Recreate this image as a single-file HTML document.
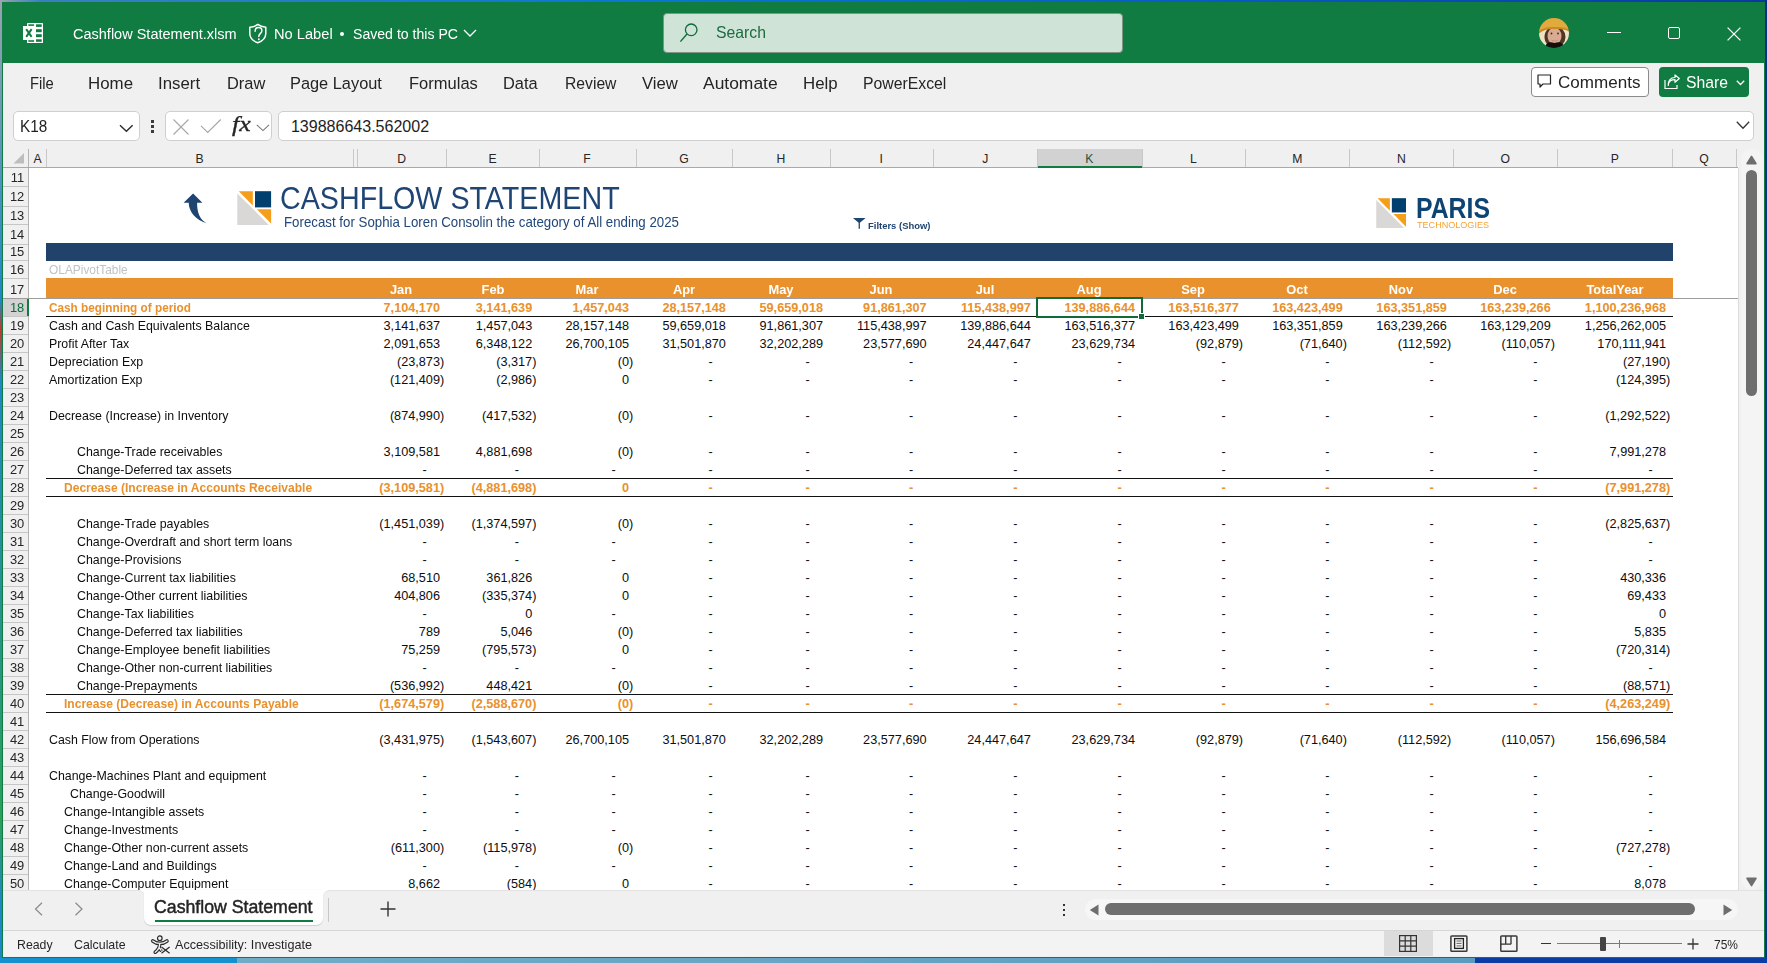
<!DOCTYPE html><html><head><meta charset="utf-8"><style>
html,body{margin:0;padding:0;}
body{width:1767px;height:963px;overflow:hidden;position:relative;background:#0b78c8;font-family:"Liberation Sans",sans-serif;}
.t{position:absolute;white-space:pre;line-height:1;}
.r{position:absolute;}
svg{position:absolute;overflow:visible;}
</style></head><body>
<div class="r" style="left:0px;top:0px;width:1767px;height:2px;background:linear-gradient(90deg,#9aa4ad 0,#3a7fc0 40px,#0b78d0 600px,#0a5bc4 1200px,#0a3aa0 1767px);"></div>
<div class="r" style="left:0px;top:0px;width:2px;height:963px;background:linear-gradient(180deg,#9aa4ad 0,#1f86c9 300px,#c0392b 330px,#1f86c9 380px,#2e9e5a 820px,#1f86c9 900px);"></div>
<div class="r" style="left:1765px;top:0px;width:2px;height:963px;background:#0a2f8a;"></div>
<div class="r" style="left:0px;top:958px;width:1767px;height:5px;background:linear-gradient(90deg,#1591cf 0,#1591cf 237px,#70acc6 237px,#5a9cc0 1475px,#0b3ca6 1475px);"></div>
<div class="r" style="left:2px;top:2px;width:1763px;height:956px;background:#f0f0f0;"></div>
<div class="r" style="left:2px;top:2px;width:1763px;height:61px;background:#107c41;"></div>
<div class="r" style="left:2px;top:63px;width:1px;height:895px;background:#107c41;"></div>
<div class="r" style="left:1764px;top:63px;width:1px;height:895px;background:#107c41;"></div>
<div class="r" style="left:2px;top:957px;width:1763px;height:1px;background:#107c41;"></div>
<svg style="left:23px;top:23px" width="20" height="20" viewBox="0 0 20 20">
<rect x="4" y="0" width="16" height="20" rx="0.4" fill="#fff"/>
<rect x="0" y="3" width="11.8" height="14" fill="#fff"/>
<rect x="5.3" y="1.3" width="5.8" height="1.6" fill="#107c41"/>
<rect x="13" y="1.3" width="5.7" height="2.6" fill="#107c41"/>
<rect x="13" y="6.2" width="5.7" height="3" fill="#107c41"/>
<rect x="13" y="11.2" width="5.7" height="3" fill="#107c41"/>
<rect x="13" y="16.3" width="5.7" height="2.5" fill="#107c41"/>
<rect x="5.3" y="17.2" width="5.8" height="1.6" fill="#107c41"/>
<path d="M3.2 6.2 L8.6 13.8 M8.6 6.2 L3.2 13.8" stroke="#107c41" stroke-width="2"/>
</svg>
<div class="t" style="top:26.28px;font-size:15.2px;color:#fff;left:73.40px;transform:scaleX(0.955);transform-origin:0 0;">Cashflow Statement.xlsm</div>
<svg style="left:248px;top:23px" width="20" height="21" viewBox="0 0 20 21">
<path d="M9.8 1.4 C11.8 3 14.8 4 17.8 4.3 V10.5 C17.8 15 14 18.2 9.8 19.8 C5.6 18.2 1.8 15 1.8 10.5 V4.3 C4.8 4 7.8 3 9.8 1.4 Z" fill="none" stroke="#fff" stroke-width="1.5" stroke-linejoin="round"/>
<path d="M7.1 8.3 C7.1 5.8 8.6 4.6 10.5 4.6 C12.5 4.6 13.9 5.9 13.9 7.7 C13.9 10.1 11 10.6 10.8 13.4" fill="none" stroke="#fff" stroke-width="1.5" stroke-linecap="round"/>
<circle cx="10.8" cy="16.3" r="0.95" fill="#fff"/>
</svg>
<div class="t" style="top:26.28px;font-size:15.2px;color:#fff;left:273.50px;transform:scaleX(0.965);transform-origin:0 0;">No Label</div>
<div class="r" style="left:339.8px;top:32px;width:4.4px;height:4.4px;border-radius:50%;background:#fff"></div>
<div class="t" style="top:26.28px;font-size:15.2px;color:#fff;left:352.50px;transform:scaleX(0.928);transform-origin:0 0;">Saved to this PC</div>
<svg style="left:463px;top:29px" width="14" height="8" viewBox="0 0 14 8"><path d="M1 1 L7 7 L13 1" fill="none" stroke="#fff" stroke-width="1.3"/></svg>
<div class="r" style="left:663px;top:13px;width:458px;height:38px;background:#d0e3d7;border:1px solid #7d9486;border-radius:4px;"></div>
<svg style="left:679px;top:22px" width="20" height="22" viewBox="0 0 20 22">
<circle cx="12.2" cy="7.8" r="5.8" fill="none" stroke="#0f6b3a" stroke-width="1.3"/>
<path d="M8 12 L1.4 19.6" stroke="#0f6b3a" stroke-width="1.4"/>
</svg>
<div class="t" style="top:23.77px;font-size:16.5px;color:#1d6b40;left:715.70px;transform:scaleX(0.955);transform-origin:0 0;">Search</div>
<svg style="left:1539px;top:18px" width="30" height="30" viewBox="0 0 30 30">
<defs><clipPath id="cp"><circle cx="15" cy="15" r="15"/></clipPath>
<filter id="bl" x="-10%" y="-10%" width="120%" height="120%"><feGaussianBlur stdDeviation="0.7"/></filter></defs>
<g clip-path="url(#cp)"><g filter="url(#bl)">
<rect width="30" height="30" fill="#efe3c6"/>
<ellipse cx="16" cy="19" rx="10.5" ry="11" fill="#4f3526"/>
<ellipse cx="15.5" cy="18" rx="7" ry="8.6" fill="#d9ab92"/>
<path d="M6 30 C7 24 11 23.5 15.5 25 C20 23.5 24 24 25 30 Z" fill="#121010"/>
<path d="M-1 16 C3 11 6 10 15 10 C22 10 27 11 31 13 L31 0 L-1 0 Z" fill="#e2aa3c"/>
<path d="M-1 17 C3 12 8 11 15 11 C22 11 27 11.5 31 14 L31 12 C27 9.5 22 9 15 9 C8 9 3 10 -1 14 Z" fill="#c98a26"/>
<circle cx="12.5" cy="15.5" r="0.9" fill="#3a2a22"/><circle cx="19" cy="15.5" r="0.9" fill="#3a2a22"/>
<path d="M12.5 22 C14.5 23.3 17 23.3 19 22" fill="none" stroke="#c98a80" stroke-width="1"/>
</g></g></svg>
<div class="r" style="left:1607px;top:32px;width:13.5px;height:1.2999999999999972px;background:#fff;"></div>
<div class="r" style="left:1667.5px;top:26.8px;width:10.6px;height:10.6px;border:1.3px solid #fff;border-radius:2px"></div>
<svg style="left:1727px;top:26.5px" width="14" height="14" viewBox="0 0 14 14"><path d="M0.6 0.6 L13.4 13.4 M13.4 0.6 L0.6 13.4" stroke="#fff" stroke-width="1.3"/></svg>
<div class="t" style="top:75.62px;font-size:16.8px;color:#242424;left:29.50px;transform:scaleX(0.879);transform-origin:0 0;">File</div>
<div class="t" style="top:75.62px;font-size:16.8px;color:#242424;left:88.30px;transform:scaleX(1.006);transform-origin:0 0;">Home</div>
<div class="t" style="top:75.62px;font-size:16.8px;color:#242424;left:158.20px;transform:scaleX(1.002);transform-origin:0 0;">Insert</div>
<div class="t" style="top:75.62px;font-size:16.8px;color:#242424;left:226.50px;transform:scaleX(0.979);transform-origin:0 0;">Draw</div>
<div class="t" style="top:75.62px;font-size:16.8px;color:#242424;left:290.30px;transform:scaleX(0.975);transform-origin:0 0;">Page Layout</div>
<div class="t" style="top:75.62px;font-size:16.8px;color:#242424;left:409.20px;transform:scaleX(0.984);transform-origin:0 0;">Formulas</div>
<div class="t" style="top:75.62px;font-size:16.8px;color:#242424;left:502.50px;transform:scaleX(0.978);transform-origin:0 0;">Data</div>
<div class="t" style="top:75.62px;font-size:16.8px;color:#242424;left:564.60px;transform:scaleX(0.935);transform-origin:0 0;">Review</div>
<div class="t" style="top:75.62px;font-size:16.8px;color:#242424;left:642.20px;transform:scaleX(0.994);transform-origin:0 0;">View</div>
<div class="t" style="top:75.62px;font-size:16.8px;color:#242424;left:702.50px;transform:scaleX(1.039);transform-origin:0 0;">Automate</div>
<div class="t" style="top:75.62px;font-size:16.8px;color:#242424;left:803.00px;transform:scaleX(1.004);transform-origin:0 0;">Help</div>
<div class="t" style="top:75.62px;font-size:16.8px;color:#242424;left:863.20px;transform:scaleX(0.941);transform-origin:0 0;">PowerExcel</div>
<div class="r" style="left:1531px;top:67px;width:116px;height:28px;background:#fff;border:1px solid #8a8a8a;border-radius:4px"></div>
<svg style="left:1537px;top:74px" width="16" height="15" viewBox="0 0 16 15">
<path d="M1 1 H13.5 V10 H6 L3 13 V10 H1 Z" fill="none" stroke="#242424" stroke-width="1.2" stroke-linejoin="round"/></svg>
<div class="t" style="top:74.72px;font-size:16.8px;color:#242424;left:1557.50px;transform:scaleX(1.016);transform-origin:0 0;">Comments</div>
<div class="r" style="left:1659px;top:67px;width:90px;height:30px;background:#107c41;border-radius:4px"></div>
<svg style="left:1664px;top:73px" width="17" height="17" viewBox="0 0 17 17">
<path d="M1 7 V15.5 H13 V12" fill="none" stroke="#fff" stroke-width="1.2"/>
<path d="M4.2 12.5 C4.2 8 8 6.6 11 6.6 V9.3 L15.3 5.5 L11 1.9 V4.5 C6.5 4.5 4.2 7.8 4.2 12.5 Z" fill="none" stroke="#fff" stroke-width="1.2" stroke-linejoin="round"/></svg>
<div class="t" style="top:74.72px;font-size:16.8px;color:#fff;left:1685.60px;transform:scaleX(0.937);transform-origin:0 0;">Share</div>
<svg style="left:1736px;top:80px" width="9" height="6" viewBox="0 0 9 6"><path d="M0.8 0.8 L4.5 4.5 L8.2 0.8" fill="none" stroke="#fff" stroke-width="1.3"/></svg>
<div class="r" style="left:12.6px;top:111px;width:125.4px;height:28px;background:#fff;border:1px solid #cfcfcf;border-radius:5px"></div>
<div class="t" style="top:118.34px;font-size:16.3px;color:#1e1e1e;left:19.80px;transform:scaleX(0.94);transform-origin:0 0;">K18</div>
<svg style="left:119px;top:124px" width="15" height="9" viewBox="0 0 15 9"><path d="M1 1.3 L7.4 7.2 L13.6 1.3" fill="none" stroke="#2a2a2a" stroke-width="1.4"/></svg>
<div class="r" style="left:151px;top:120.2px;width:3px;height:2.799999999999997px;background:#3a3a3a;"></div>
<div class="r" style="left:151px;top:125.2px;width:3px;height:2.799999999999997px;background:#3a3a3a;"></div>
<div class="r" style="left:151px;top:130.2px;width:3px;height:2.8000000000000114px;background:#3a3a3a;"></div>
<div class="r" style="left:165.3px;top:111px;width:105px;height:28px;background:#fff;border:1px solid #cfcfcf;border-radius:5px"></div>
<svg style="left:173px;top:118.5px" width="16" height="16" viewBox="0 0 16 16"><path d="M0.5 0.5 L15.5 15.5 M15.5 0.5 L0.5 15.5" stroke="#a6a6a6" stroke-width="1.1"/></svg>
<svg style="left:200px;top:118.5px" width="22" height="15" viewBox="0 0 22 15"><path d="M1 6.8 L7.7 13.5 L20.7 0.5" fill="none" stroke="#a6a6a6" stroke-width="1.1"/></svg>
<div class="t" style="left:231.5px;top:112.6px;transform:scaleX(1.17);transform-origin:0 0;font-family:'Liberation Serif',serif;font-style:italic;font-size:22px;color:#262626;-webkit-text-stroke:0.35px #262626;">fx</div>
<svg style="left:256px;top:123.5px" width="14" height="8" viewBox="0 0 14 8"><path d="M0.8 0.8 L7 6.6 L13 0.8" fill="none" stroke="#7a7a7a" stroke-width="1.1"/></svg>
<div class="r" style="left:277.5px;top:111px;width:1474.5px;height:28px;background:#fff;border:1px solid #cfcfcf;border-radius:5px"></div>
<div class="t" style="top:118.26px;font-size:16.05px;color:#1e1e1e;left:290.90px;">139886643.562002</div>
<svg style="left:1735.5px;top:121px" width="14" height="9" viewBox="0 0 14 9"><path d="M0.8 0.8 L7 7.2 L13.2 0.8" fill="none" stroke="#333" stroke-width="1.3"/></svg>
<div class="r" style="left:3px;top:149px;width:1735px;height:19px;background:#f0f0f0;"></div>
<div class="r" style="left:29px;top:168px;width:1709px;height:722px;background:#fff;"></div>
<div class="r" style="left:3px;top:168px;width:25px;height:722px;background:#f0f0f0;"></div>
<svg style="left:13px;top:153px" width="12" height="11" viewBox="0 0 12 11"><path d="M11 0 V10.5 H0.5 Z" fill="#bdbdbd"/></svg>
<div class="r" style="left:28px;top:149px;width:1px;height:741px;background:#b4b4b4;"></div>
<div class="r" style="left:3px;top:167px;width:1735px;height:1px;background:#a9a9a9;"></div>
<div class="r" style="left:1037.5px;top:149px;width:104.0px;height:19px;background:#d2d2d2;"></div>
<div class="r" style="left:1037.5px;top:166px;width:104.0px;height:2px;background:#107c41;"></div>
<div class="r" style="left:46px;top:149px;width:1px;height:18px;background:#c8c8c8;"></div>
<div class="r" style="left:353px;top:149px;width:1px;height:18px;background:#c8c8c8;"></div>
<div class="r" style="left:357px;top:149px;width:1px;height:18px;background:#c8c8c8;"></div>
<div class="r" style="left:446px;top:149px;width:1px;height:18px;background:#c8c8c8;"></div>
<div class="r" style="left:539px;top:149px;width:1px;height:18px;background:#c8c8c8;"></div>
<div class="r" style="left:636px;top:149px;width:1px;height:18px;background:#c8c8c8;"></div>
<div class="r" style="left:732px;top:149px;width:1px;height:18px;background:#c8c8c8;"></div>
<div class="r" style="left:830px;top:149px;width:1px;height:18px;background:#c8c8c8;"></div>
<div class="r" style="left:933px;top:149px;width:1px;height:18px;background:#c8c8c8;"></div>
<div class="r" style="left:1037px;top:149px;width:1px;height:18px;background:#c8c8c8;"></div>
<div class="r" style="left:1142px;top:149px;width:1px;height:18px;background:#c8c8c8;"></div>
<div class="r" style="left:1245px;top:149px;width:1px;height:18px;background:#c8c8c8;"></div>
<div class="r" style="left:1349px;top:149px;width:1px;height:18px;background:#c8c8c8;"></div>
<div class="r" style="left:1453px;top:149px;width:1px;height:18px;background:#c8c8c8;"></div>
<div class="r" style="left:1557px;top:149px;width:1px;height:18px;background:#c8c8c8;"></div>
<div class="r" style="left:1672px;top:149px;width:1px;height:18px;background:#c8c8c8;"></div>
<div class="r" style="left:1736px;top:149px;width:1px;height:18px;background:#c8c8c8;"></div>
<div class="t" style="top:152.63px;font-size:12.2px;color:#262626;left:-262.50px;width:600px;text-align:center;">A</div>
<div class="t" style="top:152.63px;font-size:12.2px;color:#262626;left:-100.45px;width:600px;text-align:center;">B</div>
<div class="t" style="top:152.63px;font-size:12.2px;color:#262626;left:101.55px;width:600px;text-align:center;">D</div>
<div class="t" style="top:152.63px;font-size:12.2px;color:#262626;left:192.60px;width:600px;text-align:center;">E</div>
<div class="t" style="top:152.63px;font-size:12.2px;color:#262626;left:287.10px;width:600px;text-align:center;">F</div>
<div class="t" style="top:152.63px;font-size:12.2px;color:#262626;left:383.95px;width:600px;text-align:center;">G</div>
<div class="t" style="top:152.63px;font-size:12.2px;color:#262626;left:480.95px;width:600px;text-align:center;">H</div>
<div class="t" style="top:152.63px;font-size:12.2px;color:#262626;left:581.30px;width:600px;text-align:center;">I</div>
<div class="t" style="top:152.63px;font-size:12.2px;color:#262626;left:685.20px;width:600px;text-align:center;">J</div>
<div class="t" style="top:152.63px;font-size:12.2px;color:#24543a;left:789.40px;width:600px;text-align:center;">K</div>
<div class="t" style="top:152.63px;font-size:12.2px;color:#262626;left:893.45px;width:600px;text-align:center;">L</div>
<div class="t" style="top:152.63px;font-size:12.2px;color:#262626;left:997.30px;width:600px;text-align:center;">M</div>
<div class="t" style="top:152.63px;font-size:12.2px;color:#262626;left:1101.30px;width:600px;text-align:center;">N</div>
<div class="t" style="top:152.63px;font-size:12.2px;color:#262626;left:1205.30px;width:600px;text-align:center;">O</div>
<div class="t" style="top:152.63px;font-size:12.2px;color:#262626;left:1314.85px;width:600px;text-align:center;">P</div>
<div class="t" style="top:152.63px;font-size:12.2px;color:#262626;left:1404.05px;width:600px;text-align:center;">Q</div>
<div class="r" style="left:3px;top:298.5px;width:25px;height:17.80000000000001px;background:#d2d2d2;"></div>
<div class="r" style="left:27px;top:298.5px;width:2px;height:17.80000000000001px;background:#107c41;"></div>
<div class="r" style="left:3px;top:186px;width:25px;height:1px;background:#c6c6c6;"></div>
<div class="t" style="top:171.34px;font-size:13.6px;color:#262626;right:1740.00px;transform:scaleX(0.95);transform-origin:100% 0;padding-right:2.5px;">11</div>
<div class="r" style="left:3px;top:206px;width:25px;height:1px;background:#c6c6c6;"></div>
<div class="t" style="top:190.34px;font-size:13.6px;color:#262626;right:1740.00px;transform:scaleX(0.95);transform-origin:100% 0;padding-right:2.5px;">12</div>
<div class="r" style="left:3px;top:224px;width:25px;height:1px;background:#c6c6c6;"></div>
<div class="t" style="top:209.34px;font-size:13.6px;color:#262626;right:1740.00px;transform:scaleX(0.95);transform-origin:100% 0;padding-right:2.5px;">13</div>
<div class="r" style="left:3px;top:244px;width:25px;height:1px;background:#c6c6c6;"></div>
<div class="t" style="top:228.34px;font-size:13.6px;color:#262626;right:1740.00px;transform:scaleX(0.95);transform-origin:100% 0;padding-right:2.5px;">14</div>
<div class="r" style="left:3px;top:260px;width:25px;height:1px;background:#c6c6c6;"></div>
<div class="t" style="top:245.04px;font-size:13.6px;color:#262626;right:1740.00px;transform:scaleX(0.95);transform-origin:100% 0;padding-right:2.5px;">15</div>
<div class="r" style="left:3px;top:278px;width:25px;height:1px;background:#c6c6c6;"></div>
<div class="t" style="top:263.24px;font-size:13.6px;color:#262626;right:1740.00px;transform:scaleX(0.95);transform-origin:100% 0;padding-right:2.5px;">16</div>
<div class="r" style="left:3px;top:298px;width:25px;height:1px;background:#c6c6c6;"></div>
<div class="t" style="top:283.04px;font-size:13.6px;color:#262626;right:1740.00px;transform:scaleX(0.95);transform-origin:100% 0;padding-right:2.5px;">17</div>
<div class="r" style="left:3px;top:316px;width:25px;height:1px;background:#c6c6c6;"></div>
<div class="t" style="top:301.14px;font-size:13.6px;color:#0e6b3a;right:1740.00px;transform:scaleX(0.95);transform-origin:100% 0;padding-right:2.5px;">18</div>
<div class="r" style="left:3px;top:334px;width:25px;height:1px;background:#c6c6c6;"></div>
<div class="t" style="top:319.14px;font-size:13.6px;color:#262626;right:1740.00px;transform:scaleX(0.95);transform-origin:100% 0;padding-right:2.5px;">19</div>
<div class="r" style="left:3px;top:352px;width:25px;height:1px;background:#c6c6c6;"></div>
<div class="t" style="top:337.14px;font-size:13.6px;color:#262626;right:1740.00px;transform:scaleX(0.95);transform-origin:100% 0;padding-right:2.5px;">20</div>
<div class="r" style="left:3px;top:370px;width:25px;height:1px;background:#c6c6c6;"></div>
<div class="t" style="top:355.14px;font-size:13.6px;color:#262626;right:1740.00px;transform:scaleX(0.95);transform-origin:100% 0;padding-right:2.5px;">21</div>
<div class="r" style="left:3px;top:388px;width:25px;height:1px;background:#c6c6c6;"></div>
<div class="t" style="top:373.14px;font-size:13.6px;color:#262626;right:1740.00px;transform:scaleX(0.95);transform-origin:100% 0;padding-right:2.5px;">22</div>
<div class="r" style="left:3px;top:406px;width:25px;height:1px;background:#c6c6c6;"></div>
<div class="t" style="top:391.14px;font-size:13.6px;color:#262626;right:1740.00px;transform:scaleX(0.95);transform-origin:100% 0;padding-right:2.5px;">23</div>
<div class="r" style="left:3px;top:424px;width:25px;height:1px;background:#c6c6c6;"></div>
<div class="t" style="top:409.14px;font-size:13.6px;color:#262626;right:1740.00px;transform:scaleX(0.95);transform-origin:100% 0;padding-right:2.5px;">24</div>
<div class="r" style="left:3px;top:442px;width:25px;height:1px;background:#c6c6c6;"></div>
<div class="t" style="top:427.14px;font-size:13.6px;color:#262626;right:1740.00px;transform:scaleX(0.95);transform-origin:100% 0;padding-right:2.5px;">25</div>
<div class="r" style="left:3px;top:460px;width:25px;height:1px;background:#c6c6c6;"></div>
<div class="t" style="top:445.14px;font-size:13.6px;color:#262626;right:1740.00px;transform:scaleX(0.95);transform-origin:100% 0;padding-right:2.5px;">26</div>
<div class="r" style="left:3px;top:478px;width:25px;height:1px;background:#c6c6c6;"></div>
<div class="t" style="top:463.14px;font-size:13.6px;color:#262626;right:1740.00px;transform:scaleX(0.95);transform-origin:100% 0;padding-right:2.5px;">27</div>
<div class="r" style="left:3px;top:496px;width:25px;height:1px;background:#c6c6c6;"></div>
<div class="t" style="top:481.14px;font-size:13.6px;color:#262626;right:1740.00px;transform:scaleX(0.95);transform-origin:100% 0;padding-right:2.5px;">28</div>
<div class="r" style="left:3px;top:514px;width:25px;height:1px;background:#c6c6c6;"></div>
<div class="t" style="top:499.14px;font-size:13.6px;color:#262626;right:1740.00px;transform:scaleX(0.95);transform-origin:100% 0;padding-right:2.5px;">29</div>
<div class="r" style="left:3px;top:532px;width:25px;height:1px;background:#c6c6c6;"></div>
<div class="t" style="top:517.14px;font-size:13.6px;color:#262626;right:1740.00px;transform:scaleX(0.95);transform-origin:100% 0;padding-right:2.5px;">30</div>
<div class="r" style="left:3px;top:550px;width:25px;height:1px;background:#c6c6c6;"></div>
<div class="t" style="top:535.14px;font-size:13.6px;color:#262626;right:1740.00px;transform:scaleX(0.95);transform-origin:100% 0;padding-right:2.5px;">31</div>
<div class="r" style="left:3px;top:568px;width:25px;height:1px;background:#c6c6c6;"></div>
<div class="t" style="top:553.14px;font-size:13.6px;color:#262626;right:1740.00px;transform:scaleX(0.95);transform-origin:100% 0;padding-right:2.5px;">32</div>
<div class="r" style="left:3px;top:586px;width:25px;height:1px;background:#c6c6c6;"></div>
<div class="t" style="top:571.14px;font-size:13.6px;color:#262626;right:1740.00px;transform:scaleX(0.95);transform-origin:100% 0;padding-right:2.5px;">33</div>
<div class="r" style="left:3px;top:604px;width:25px;height:1px;background:#c6c6c6;"></div>
<div class="t" style="top:589.14px;font-size:13.6px;color:#262626;right:1740.00px;transform:scaleX(0.95);transform-origin:100% 0;padding-right:2.5px;">34</div>
<div class="r" style="left:3px;top:622px;width:25px;height:1px;background:#c6c6c6;"></div>
<div class="t" style="top:607.14px;font-size:13.6px;color:#262626;right:1740.00px;transform:scaleX(0.95);transform-origin:100% 0;padding-right:2.5px;">35</div>
<div class="r" style="left:3px;top:640px;width:25px;height:1px;background:#c6c6c6;"></div>
<div class="t" style="top:625.14px;font-size:13.6px;color:#262626;right:1740.00px;transform:scaleX(0.95);transform-origin:100% 0;padding-right:2.5px;">36</div>
<div class="r" style="left:3px;top:658px;width:25px;height:1px;background:#c6c6c6;"></div>
<div class="t" style="top:643.14px;font-size:13.6px;color:#262626;right:1740.00px;transform:scaleX(0.95);transform-origin:100% 0;padding-right:2.5px;">37</div>
<div class="r" style="left:3px;top:676px;width:25px;height:1px;background:#c6c6c6;"></div>
<div class="t" style="top:661.14px;font-size:13.6px;color:#262626;right:1740.00px;transform:scaleX(0.95);transform-origin:100% 0;padding-right:2.5px;">38</div>
<div class="r" style="left:3px;top:694px;width:25px;height:1px;background:#c6c6c6;"></div>
<div class="t" style="top:679.14px;font-size:13.6px;color:#262626;right:1740.00px;transform:scaleX(0.95);transform-origin:100% 0;padding-right:2.5px;">39</div>
<div class="r" style="left:3px;top:712px;width:25px;height:1px;background:#c6c6c6;"></div>
<div class="t" style="top:697.14px;font-size:13.6px;color:#262626;right:1740.00px;transform:scaleX(0.95);transform-origin:100% 0;padding-right:2.5px;">40</div>
<div class="r" style="left:3px;top:730px;width:25px;height:1px;background:#c6c6c6;"></div>
<div class="t" style="top:715.14px;font-size:13.6px;color:#262626;right:1740.00px;transform:scaleX(0.95);transform-origin:100% 0;padding-right:2.5px;">41</div>
<div class="r" style="left:3px;top:748px;width:25px;height:1px;background:#c6c6c6;"></div>
<div class="t" style="top:733.14px;font-size:13.6px;color:#262626;right:1740.00px;transform:scaleX(0.95);transform-origin:100% 0;padding-right:2.5px;">42</div>
<div class="r" style="left:3px;top:766px;width:25px;height:1px;background:#c6c6c6;"></div>
<div class="t" style="top:751.14px;font-size:13.6px;color:#262626;right:1740.00px;transform:scaleX(0.95);transform-origin:100% 0;padding-right:2.5px;">43</div>
<div class="r" style="left:3px;top:784px;width:25px;height:1px;background:#c6c6c6;"></div>
<div class="t" style="top:769.14px;font-size:13.6px;color:#262626;right:1740.00px;transform:scaleX(0.95);transform-origin:100% 0;padding-right:2.5px;">44</div>
<div class="r" style="left:3px;top:802px;width:25px;height:1px;background:#c6c6c6;"></div>
<div class="t" style="top:787.14px;font-size:13.6px;color:#262626;right:1740.00px;transform:scaleX(0.95);transform-origin:100% 0;padding-right:2.5px;">45</div>
<div class="r" style="left:3px;top:820px;width:25px;height:1px;background:#c6c6c6;"></div>
<div class="t" style="top:805.14px;font-size:13.6px;color:#262626;right:1740.00px;transform:scaleX(0.95);transform-origin:100% 0;padding-right:2.5px;">46</div>
<div class="r" style="left:3px;top:838px;width:25px;height:1px;background:#c6c6c6;"></div>
<div class="t" style="top:823.14px;font-size:13.6px;color:#262626;right:1740.00px;transform:scaleX(0.95);transform-origin:100% 0;padding-right:2.5px;">47</div>
<div class="r" style="left:3px;top:856px;width:25px;height:1px;background:#c6c6c6;"></div>
<div class="t" style="top:841.14px;font-size:13.6px;color:#262626;right:1740.00px;transform:scaleX(0.95);transform-origin:100% 0;padding-right:2.5px;">48</div>
<div class="r" style="left:3px;top:874px;width:25px;height:1px;background:#c6c6c6;"></div>
<div class="t" style="top:859.14px;font-size:13.6px;color:#262626;right:1740.00px;transform:scaleX(0.95);transform-origin:100% 0;padding-right:2.5px;">49</div>
<div class="t" style="top:877.14px;font-size:13.6px;color:#262626;right:1740.00px;transform:scaleX(0.95);transform-origin:100% 0;padding-right:2.5px;">50</div>
<div class="r" style="left:3px;top:298px;width:1735px;height:1px;background:#9d9d9d;"></div>
<svg style="left:0;top:0" width="1" height="1"><path d="M193.1 193.4 L202.4 202.8 L197.1 202.8 C197 212 199.5 219.5 206.5 223.2 C196 220 188.8 212 188.7 202.8 L183.6 202.8 Z" fill="#1f4470"/></svg>
<svg style="left:236.7px;top:190.8px" width="35.0" height="35.0" viewBox="0 0 35 35">
<path d="M0.3 2.4 L31.9 34 H0.3 Z" fill="#d9d8d6"/>
<path d="M1.8 0.2 H15.8 V14.5 Z" fill="#f59e1b"/>
<rect x="18" y="0.2" width="16.1" height="16.2" fill="#003f6e"/>
<path d="M19.9 18.2 H34.1 V32.6 Z" fill="#f59e1b"/>
</svg>
<svg style="left:1376.2px;top:197.8px" width="30.8" height="30.8" viewBox="0 0 35 35">
<path d="M0.3 2.4 L31.9 34 H0.3 Z" fill="#d9d8d6"/>
<path d="M1.8 0.2 H15.8 V14.5 Z" fill="#f59e1b"/>
<rect x="18" y="0.2" width="16.1" height="16.2" fill="#003f6e"/>
<path d="M19.9 18.2 H34.1 V32.6 Z" fill="#f59e1b"/>
</svg>
<div class="t" style="top:183.41px;font-size:31.4px;color:#1e4574;left:280.00px;transform:scaleX(0.913);transform-origin:0 0;">CASHFLOW STATEMENT</div>
<div class="t" style="top:215.13px;font-size:14.2px;color:#22487a;left:283.60px;transform:scaleX(0.936);transform-origin:0 0;">Forecast for Sophia Loren Consolin the category of All ending 2025</div>
<svg style="left:852.5px;top:218px" width="13" height="11" viewBox="0 0 13 11"><path d="M0 0 H12.6 L6.9 4.8 V10.8 L5.6 10.8 V4.8 Z" fill="#1f4470"/></svg>
<div class="t" style="top:220.54px;font-size:9.6px;color:#1f4470;font-weight:700;left:868.30px;transform:scaleX(0.985);transform-origin:0 0;">Filters (Show)</div>
<div class="t" style="top:193.55px;font-size:29px;color:#0d4474;font-weight:700;left:1415.80px;transform:scaleX(0.855);transform-origin:0 0;">PARIS</div>
<div class="t" style="top:220.34px;font-size:9.6px;color:#f7a335;left:1417.00px;transform:scaleX(0.945);transform-origin:0 0;">TECHNOLOGIES</div>
<div class="r" style="left:46px;top:243px;width:1626.7px;height:18px;background:#21436b;"></div>
<div class="t" style="top:263.30px;font-size:13.3px;color:#c2c2c2;left:49.30px;transform:scaleX(0.895);transform-origin:0 0;">OLAPivotTable</div>
<div class="r" style="left:46px;top:278.3px;width:1626.7px;height:19.69999999999999px;background:#e8912d;"></div>
<div class="t" style="top:283.32px;font-size:13.5px;color:#fff;font-weight:700;left:100.75px;width:600px;text-align:center;transform:scaleX(0.955);transform-origin:50% 0;">Jan</div>
<div class="t" style="top:283.32px;font-size:13.5px;color:#fff;font-weight:700;left:192.60px;width:600px;text-align:center;transform:scaleX(0.955);transform-origin:50% 0;">Feb</div>
<div class="t" style="top:283.32px;font-size:13.5px;color:#fff;font-weight:700;left:287.10px;width:600px;text-align:center;transform:scaleX(0.955);transform-origin:50% 0;">Mar</div>
<div class="t" style="top:283.32px;font-size:13.5px;color:#fff;font-weight:700;left:383.95px;width:600px;text-align:center;transform:scaleX(0.955);transform-origin:50% 0;">Apr</div>
<div class="t" style="top:283.32px;font-size:13.5px;color:#fff;font-weight:700;left:480.95px;width:600px;text-align:center;transform:scaleX(0.955);transform-origin:50% 0;">May</div>
<div class="t" style="top:283.32px;font-size:13.5px;color:#fff;font-weight:700;left:581.30px;width:600px;text-align:center;transform:scaleX(0.955);transform-origin:50% 0;">Jun</div>
<div class="t" style="top:283.32px;font-size:13.5px;color:#fff;font-weight:700;left:685.20px;width:600px;text-align:center;transform:scaleX(0.955);transform-origin:50% 0;">Jul</div>
<div class="t" style="top:283.32px;font-size:13.5px;color:#fff;font-weight:700;left:789.40px;width:600px;text-align:center;transform:scaleX(0.955);transform-origin:50% 0;">Aug</div>
<div class="t" style="top:283.32px;font-size:13.5px;color:#fff;font-weight:700;left:893.45px;width:600px;text-align:center;transform:scaleX(0.955);transform-origin:50% 0;">Sep</div>
<div class="t" style="top:283.32px;font-size:13.5px;color:#fff;font-weight:700;left:997.30px;width:600px;text-align:center;transform:scaleX(0.955);transform-origin:50% 0;">Oct</div>
<div class="t" style="top:283.32px;font-size:13.5px;color:#fff;font-weight:700;left:1101.30px;width:600px;text-align:center;transform:scaleX(0.955);transform-origin:50% 0;">Nov</div>
<div class="t" style="top:283.32px;font-size:13.5px;color:#fff;font-weight:700;left:1205.30px;width:600px;text-align:center;transform:scaleX(0.955);transform-origin:50% 0;">Dec</div>
<div class="t" style="top:283.32px;font-size:13.5px;color:#fff;font-weight:700;left:1314.85px;width:600px;text-align:center;transform:scaleX(0.955);transform-origin:50% 0;">TotalYear</div>
<div class="t" style="top:302.00px;font-size:12.7px;color:#e8912d;font-weight:700;left:49.20px;transform:scaleX(0.928);transform-origin:0 0;">Cash beginning of period</div>
<div class="t" style="top:302.00px;font-size:12.7px;color:#e8912d;font-weight:700;right:1327.00px;">7,104,170</div>
<div class="t" style="top:302.00px;font-size:12.7px;color:#e8912d;font-weight:700;right:1234.80px;">3,141,639</div>
<div class="t" style="top:302.00px;font-size:12.7px;color:#e8912d;font-weight:700;right:1138.00px;">1,457,043</div>
<div class="t" style="top:302.00px;font-size:12.7px;color:#e8912d;font-weight:700;right:1041.10px;">28,157,148</div>
<div class="t" style="top:302.00px;font-size:12.7px;color:#e8912d;font-weight:700;right:944.00px;">59,659,018</div>
<div class="t" style="top:302.00px;font-size:12.7px;color:#e8912d;font-weight:700;right:840.40px;">91,861,307</div>
<div class="t" style="top:302.00px;font-size:12.7px;color:#e8912d;font-weight:700;right:736.20px;">115,438,997</div>
<div class="t" style="top:302.00px;font-size:12.7px;color:#e8912d;font-weight:700;right:632.00px;">139,886,644</div>
<div class="t" style="top:302.00px;font-size:12.7px;color:#e8912d;font-weight:700;right:528.10px;">163,516,377</div>
<div class="t" style="top:302.00px;font-size:12.7px;color:#e8912d;font-weight:700;right:424.30px;">163,423,499</div>
<div class="t" style="top:302.00px;font-size:12.7px;color:#e8912d;font-weight:700;right:320.10px;">163,351,859</div>
<div class="t" style="top:302.00px;font-size:12.7px;color:#e8912d;font-weight:700;right:216.30px;">163,239,266</div>
<div class="t" style="top:302.00px;font-size:12.7px;color:#e8912d;font-weight:700;right:101.00px;">1,100,236,968</div>
<div class="t" style="top:320.00px;font-size:12.7px;color:#0d0d0d;left:49.20px;transform:scaleX(0.975);transform-origin:0 0;">Cash and Cash Equivalents Balance</div>
<div class="t" style="top:320.00px;font-size:12.7px;color:#0d0d0d;right:1327.00px;">3,141,637</div>
<div class="t" style="top:320.00px;font-size:12.7px;color:#0d0d0d;right:1234.80px;">1,457,043</div>
<div class="t" style="top:320.00px;font-size:12.7px;color:#0d0d0d;right:1138.00px;">28,157,148</div>
<div class="t" style="top:320.00px;font-size:12.7px;color:#0d0d0d;right:1041.10px;">59,659,018</div>
<div class="t" style="top:320.00px;font-size:12.7px;color:#0d0d0d;right:944.00px;">91,861,307</div>
<div class="t" style="top:320.00px;font-size:12.7px;color:#0d0d0d;right:840.40px;">115,438,997</div>
<div class="t" style="top:320.00px;font-size:12.7px;color:#0d0d0d;right:736.20px;">139,886,644</div>
<div class="t" style="top:320.00px;font-size:12.7px;color:#0d0d0d;right:632.00px;">163,516,377</div>
<div class="t" style="top:320.00px;font-size:12.7px;color:#0d0d0d;right:528.10px;">163,423,499</div>
<div class="t" style="top:320.00px;font-size:12.7px;color:#0d0d0d;right:424.30px;">163,351,859</div>
<div class="t" style="top:320.00px;font-size:12.7px;color:#0d0d0d;right:320.10px;">163,239,266</div>
<div class="t" style="top:320.00px;font-size:12.7px;color:#0d0d0d;right:216.30px;">163,129,209</div>
<div class="t" style="top:320.00px;font-size:12.7px;color:#0d0d0d;right:101.00px;">1,256,262,005</div>
<div class="t" style="top:338.00px;font-size:12.7px;color:#0d0d0d;left:49.20px;transform:scaleX(0.975);transform-origin:0 0;">Profit After Tax</div>
<div class="t" style="top:338.00px;font-size:12.7px;color:#0d0d0d;right:1327.00px;">2,091,653</div>
<div class="t" style="top:338.00px;font-size:12.7px;color:#0d0d0d;right:1234.80px;">6,348,122</div>
<div class="t" style="top:338.00px;font-size:12.7px;color:#0d0d0d;right:1138.00px;">26,700,105</div>
<div class="t" style="top:338.00px;font-size:12.7px;color:#0d0d0d;right:1041.10px;">31,501,870</div>
<div class="t" style="top:338.00px;font-size:12.7px;color:#0d0d0d;right:944.00px;">32,202,289</div>
<div class="t" style="top:338.00px;font-size:12.7px;color:#0d0d0d;right:840.40px;">23,577,690</div>
<div class="t" style="top:338.00px;font-size:12.7px;color:#0d0d0d;right:736.20px;">24,447,647</div>
<div class="t" style="top:338.00px;font-size:12.7px;color:#0d0d0d;right:632.00px;">23,629,734</div>
<div class="t" style="top:338.00px;font-size:12.7px;color:#0d0d0d;right:523.90px;">(92,879)</div>
<div class="t" style="top:338.00px;font-size:12.7px;color:#0d0d0d;right:420.10px;">(71,640)</div>
<div class="t" style="top:338.00px;font-size:12.7px;color:#0d0d0d;right:315.90px;">(112,592)</div>
<div class="t" style="top:338.00px;font-size:12.7px;color:#0d0d0d;right:212.10px;">(110,057)</div>
<div class="t" style="top:338.00px;font-size:12.7px;color:#0d0d0d;right:101.00px;">170,111,941</div>
<div class="t" style="top:356.00px;font-size:12.7px;color:#0d0d0d;left:49.20px;transform:scaleX(0.975);transform-origin:0 0;">Depreciation Exp</div>
<div class="t" style="top:356.00px;font-size:12.7px;color:#0d0d0d;right:1322.80px;">(23,873)</div>
<div class="t" style="top:356.00px;font-size:12.7px;color:#0d0d0d;right:1230.60px;">(3,317)</div>
<div class="t" style="top:356.00px;font-size:12.7px;color:#0d0d0d;right:1133.80px;">(0)</div>
<div class="t" style="top:356.00px;font-size:12.7px;color:#0d0d0d;right:1054.40px;">-</div>
<div class="t" style="top:356.00px;font-size:12.7px;color:#0d0d0d;right:957.30px;">-</div>
<div class="t" style="top:356.00px;font-size:12.7px;color:#0d0d0d;right:853.70px;">-</div>
<div class="t" style="top:356.00px;font-size:12.7px;color:#0d0d0d;right:749.50px;">-</div>
<div class="t" style="top:356.00px;font-size:12.7px;color:#0d0d0d;right:645.30px;">-</div>
<div class="t" style="top:356.00px;font-size:12.7px;color:#0d0d0d;right:541.40px;">-</div>
<div class="t" style="top:356.00px;font-size:12.7px;color:#0d0d0d;right:437.60px;">-</div>
<div class="t" style="top:356.00px;font-size:12.7px;color:#0d0d0d;right:333.40px;">-</div>
<div class="t" style="top:356.00px;font-size:12.7px;color:#0d0d0d;right:229.60px;">-</div>
<div class="t" style="top:356.00px;font-size:12.7px;color:#0d0d0d;right:96.80px;">(27,190)</div>
<div class="t" style="top:374.00px;font-size:12.7px;color:#0d0d0d;left:49.20px;transform:scaleX(0.975);transform-origin:0 0;">Amortization Exp</div>
<div class="t" style="top:374.00px;font-size:12.7px;color:#0d0d0d;right:1322.80px;">(121,409)</div>
<div class="t" style="top:374.00px;font-size:12.7px;color:#0d0d0d;right:1230.60px;">(2,986)</div>
<div class="t" style="top:374.00px;font-size:12.7px;color:#0d0d0d;right:1138.00px;">0</div>
<div class="t" style="top:374.00px;font-size:12.7px;color:#0d0d0d;right:1054.40px;">-</div>
<div class="t" style="top:374.00px;font-size:12.7px;color:#0d0d0d;right:957.30px;">-</div>
<div class="t" style="top:374.00px;font-size:12.7px;color:#0d0d0d;right:853.70px;">-</div>
<div class="t" style="top:374.00px;font-size:12.7px;color:#0d0d0d;right:749.50px;">-</div>
<div class="t" style="top:374.00px;font-size:12.7px;color:#0d0d0d;right:645.30px;">-</div>
<div class="t" style="top:374.00px;font-size:12.7px;color:#0d0d0d;right:541.40px;">-</div>
<div class="t" style="top:374.00px;font-size:12.7px;color:#0d0d0d;right:437.60px;">-</div>
<div class="t" style="top:374.00px;font-size:12.7px;color:#0d0d0d;right:333.40px;">-</div>
<div class="t" style="top:374.00px;font-size:12.7px;color:#0d0d0d;right:229.60px;">-</div>
<div class="t" style="top:374.00px;font-size:12.7px;color:#0d0d0d;right:96.80px;">(124,395)</div>
<div class="t" style="top:410.00px;font-size:12.7px;color:#0d0d0d;left:49.20px;transform:scaleX(0.975);transform-origin:0 0;">Decrease (Increase) in Inventory</div>
<div class="t" style="top:410.00px;font-size:12.7px;color:#0d0d0d;right:1322.80px;">(874,990)</div>
<div class="t" style="top:410.00px;font-size:12.7px;color:#0d0d0d;right:1230.60px;">(417,532)</div>
<div class="t" style="top:410.00px;font-size:12.7px;color:#0d0d0d;right:1133.80px;">(0)</div>
<div class="t" style="top:410.00px;font-size:12.7px;color:#0d0d0d;right:1054.40px;">-</div>
<div class="t" style="top:410.00px;font-size:12.7px;color:#0d0d0d;right:957.30px;">-</div>
<div class="t" style="top:410.00px;font-size:12.7px;color:#0d0d0d;right:853.70px;">-</div>
<div class="t" style="top:410.00px;font-size:12.7px;color:#0d0d0d;right:749.50px;">-</div>
<div class="t" style="top:410.00px;font-size:12.7px;color:#0d0d0d;right:645.30px;">-</div>
<div class="t" style="top:410.00px;font-size:12.7px;color:#0d0d0d;right:541.40px;">-</div>
<div class="t" style="top:410.00px;font-size:12.7px;color:#0d0d0d;right:437.60px;">-</div>
<div class="t" style="top:410.00px;font-size:12.7px;color:#0d0d0d;right:333.40px;">-</div>
<div class="t" style="top:410.00px;font-size:12.7px;color:#0d0d0d;right:229.60px;">-</div>
<div class="t" style="top:410.00px;font-size:12.7px;color:#0d0d0d;right:96.80px;">(1,292,522)</div>
<div class="t" style="top:446.00px;font-size:12.7px;color:#0d0d0d;left:77.40px;transform:scaleX(0.975);transform-origin:0 0;">Change-Trade receivables</div>
<div class="t" style="top:446.00px;font-size:12.7px;color:#0d0d0d;right:1327.00px;">3,109,581</div>
<div class="t" style="top:446.00px;font-size:12.7px;color:#0d0d0d;right:1234.80px;">4,881,698</div>
<div class="t" style="top:446.00px;font-size:12.7px;color:#0d0d0d;right:1133.80px;">(0)</div>
<div class="t" style="top:446.00px;font-size:12.7px;color:#0d0d0d;right:1054.40px;">-</div>
<div class="t" style="top:446.00px;font-size:12.7px;color:#0d0d0d;right:957.30px;">-</div>
<div class="t" style="top:446.00px;font-size:12.7px;color:#0d0d0d;right:853.70px;">-</div>
<div class="t" style="top:446.00px;font-size:12.7px;color:#0d0d0d;right:749.50px;">-</div>
<div class="t" style="top:446.00px;font-size:12.7px;color:#0d0d0d;right:645.30px;">-</div>
<div class="t" style="top:446.00px;font-size:12.7px;color:#0d0d0d;right:541.40px;">-</div>
<div class="t" style="top:446.00px;font-size:12.7px;color:#0d0d0d;right:437.60px;">-</div>
<div class="t" style="top:446.00px;font-size:12.7px;color:#0d0d0d;right:333.40px;">-</div>
<div class="t" style="top:446.00px;font-size:12.7px;color:#0d0d0d;right:229.60px;">-</div>
<div class="t" style="top:446.00px;font-size:12.7px;color:#0d0d0d;right:101.00px;">7,991,278</div>
<div class="t" style="top:464.00px;font-size:12.7px;color:#0d0d0d;left:77.40px;transform:scaleX(0.975);transform-origin:0 0;">Change-Deferred tax assets</div>
<div class="t" style="top:464.00px;font-size:12.7px;color:#0d0d0d;right:1340.30px;">-</div>
<div class="t" style="top:464.00px;font-size:12.7px;color:#0d0d0d;right:1248.10px;">-</div>
<div class="t" style="top:464.00px;font-size:12.7px;color:#0d0d0d;right:1151.30px;">-</div>
<div class="t" style="top:464.00px;font-size:12.7px;color:#0d0d0d;right:1054.40px;">-</div>
<div class="t" style="top:464.00px;font-size:12.7px;color:#0d0d0d;right:957.30px;">-</div>
<div class="t" style="top:464.00px;font-size:12.7px;color:#0d0d0d;right:853.70px;">-</div>
<div class="t" style="top:464.00px;font-size:12.7px;color:#0d0d0d;right:749.50px;">-</div>
<div class="t" style="top:464.00px;font-size:12.7px;color:#0d0d0d;right:645.30px;">-</div>
<div class="t" style="top:464.00px;font-size:12.7px;color:#0d0d0d;right:541.40px;">-</div>
<div class="t" style="top:464.00px;font-size:12.7px;color:#0d0d0d;right:437.60px;">-</div>
<div class="t" style="top:464.00px;font-size:12.7px;color:#0d0d0d;right:333.40px;">-</div>
<div class="t" style="top:464.00px;font-size:12.7px;color:#0d0d0d;right:229.60px;">-</div>
<div class="t" style="top:464.00px;font-size:12.7px;color:#0d0d0d;right:114.30px;">-</div>
<div class="t" style="top:482.00px;font-size:12.7px;color:#e8912d;font-weight:700;left:63.50px;transform:scaleX(0.95);transform-origin:0 0;">Decrease (Increase in Accounts Receivable</div>
<div class="t" style="top:482.00px;font-size:12.7px;color:#e8912d;font-weight:700;right:1322.80px;">(3,109,581)</div>
<div class="t" style="top:482.00px;font-size:12.7px;color:#e8912d;font-weight:700;right:1230.60px;">(4,881,698)</div>
<div class="t" style="top:482.00px;font-size:12.7px;color:#e8912d;font-weight:700;right:1138.00px;">0</div>
<div class="t" style="top:482.00px;font-size:12.7px;color:#e8912d;font-weight:700;right:1054.40px;">-</div>
<div class="t" style="top:482.00px;font-size:12.7px;color:#e8912d;font-weight:700;right:957.30px;">-</div>
<div class="t" style="top:482.00px;font-size:12.7px;color:#e8912d;font-weight:700;right:853.70px;">-</div>
<div class="t" style="top:482.00px;font-size:12.7px;color:#e8912d;font-weight:700;right:749.50px;">-</div>
<div class="t" style="top:482.00px;font-size:12.7px;color:#e8912d;font-weight:700;right:645.30px;">-</div>
<div class="t" style="top:482.00px;font-size:12.7px;color:#e8912d;font-weight:700;right:541.40px;">-</div>
<div class="t" style="top:482.00px;font-size:12.7px;color:#e8912d;font-weight:700;right:437.60px;">-</div>
<div class="t" style="top:482.00px;font-size:12.7px;color:#e8912d;font-weight:700;right:333.40px;">-</div>
<div class="t" style="top:482.00px;font-size:12.7px;color:#e8912d;font-weight:700;right:229.60px;">-</div>
<div class="t" style="top:482.00px;font-size:12.7px;color:#e8912d;font-weight:700;right:96.80px;">(7,991,278)</div>
<div class="t" style="top:518.00px;font-size:12.7px;color:#0d0d0d;left:77.40px;transform:scaleX(0.975);transform-origin:0 0;">Change-Trade payables</div>
<div class="t" style="top:518.00px;font-size:12.7px;color:#0d0d0d;right:1322.80px;">(1,451,039)</div>
<div class="t" style="top:518.00px;font-size:12.7px;color:#0d0d0d;right:1230.60px;">(1,374,597)</div>
<div class="t" style="top:518.00px;font-size:12.7px;color:#0d0d0d;right:1133.80px;">(0)</div>
<div class="t" style="top:518.00px;font-size:12.7px;color:#0d0d0d;right:1054.40px;">-</div>
<div class="t" style="top:518.00px;font-size:12.7px;color:#0d0d0d;right:957.30px;">-</div>
<div class="t" style="top:518.00px;font-size:12.7px;color:#0d0d0d;right:853.70px;">-</div>
<div class="t" style="top:518.00px;font-size:12.7px;color:#0d0d0d;right:749.50px;">-</div>
<div class="t" style="top:518.00px;font-size:12.7px;color:#0d0d0d;right:645.30px;">-</div>
<div class="t" style="top:518.00px;font-size:12.7px;color:#0d0d0d;right:541.40px;">-</div>
<div class="t" style="top:518.00px;font-size:12.7px;color:#0d0d0d;right:437.60px;">-</div>
<div class="t" style="top:518.00px;font-size:12.7px;color:#0d0d0d;right:333.40px;">-</div>
<div class="t" style="top:518.00px;font-size:12.7px;color:#0d0d0d;right:229.60px;">-</div>
<div class="t" style="top:518.00px;font-size:12.7px;color:#0d0d0d;right:96.80px;">(2,825,637)</div>
<div class="t" style="top:536.00px;font-size:12.7px;color:#0d0d0d;left:77.40px;transform:scaleX(0.975);transform-origin:0 0;">Change-Overdraft and short term loans</div>
<div class="t" style="top:536.00px;font-size:12.7px;color:#0d0d0d;right:1340.30px;">-</div>
<div class="t" style="top:536.00px;font-size:12.7px;color:#0d0d0d;right:1248.10px;">-</div>
<div class="t" style="top:536.00px;font-size:12.7px;color:#0d0d0d;right:1151.30px;">-</div>
<div class="t" style="top:536.00px;font-size:12.7px;color:#0d0d0d;right:1054.40px;">-</div>
<div class="t" style="top:536.00px;font-size:12.7px;color:#0d0d0d;right:957.30px;">-</div>
<div class="t" style="top:536.00px;font-size:12.7px;color:#0d0d0d;right:853.70px;">-</div>
<div class="t" style="top:536.00px;font-size:12.7px;color:#0d0d0d;right:749.50px;">-</div>
<div class="t" style="top:536.00px;font-size:12.7px;color:#0d0d0d;right:645.30px;">-</div>
<div class="t" style="top:536.00px;font-size:12.7px;color:#0d0d0d;right:541.40px;">-</div>
<div class="t" style="top:536.00px;font-size:12.7px;color:#0d0d0d;right:437.60px;">-</div>
<div class="t" style="top:536.00px;font-size:12.7px;color:#0d0d0d;right:333.40px;">-</div>
<div class="t" style="top:536.00px;font-size:12.7px;color:#0d0d0d;right:229.60px;">-</div>
<div class="t" style="top:536.00px;font-size:12.7px;color:#0d0d0d;right:114.30px;">-</div>
<div class="t" style="top:554.00px;font-size:12.7px;color:#0d0d0d;left:77.40px;transform:scaleX(0.975);transform-origin:0 0;">Change-Provisions</div>
<div class="t" style="top:554.00px;font-size:12.7px;color:#0d0d0d;right:1340.30px;">-</div>
<div class="t" style="top:554.00px;font-size:12.7px;color:#0d0d0d;right:1248.10px;">-</div>
<div class="t" style="top:554.00px;font-size:12.7px;color:#0d0d0d;right:1151.30px;">-</div>
<div class="t" style="top:554.00px;font-size:12.7px;color:#0d0d0d;right:1054.40px;">-</div>
<div class="t" style="top:554.00px;font-size:12.7px;color:#0d0d0d;right:957.30px;">-</div>
<div class="t" style="top:554.00px;font-size:12.7px;color:#0d0d0d;right:853.70px;">-</div>
<div class="t" style="top:554.00px;font-size:12.7px;color:#0d0d0d;right:749.50px;">-</div>
<div class="t" style="top:554.00px;font-size:12.7px;color:#0d0d0d;right:645.30px;">-</div>
<div class="t" style="top:554.00px;font-size:12.7px;color:#0d0d0d;right:541.40px;">-</div>
<div class="t" style="top:554.00px;font-size:12.7px;color:#0d0d0d;right:437.60px;">-</div>
<div class="t" style="top:554.00px;font-size:12.7px;color:#0d0d0d;right:333.40px;">-</div>
<div class="t" style="top:554.00px;font-size:12.7px;color:#0d0d0d;right:229.60px;">-</div>
<div class="t" style="top:554.00px;font-size:12.7px;color:#0d0d0d;right:114.30px;">-</div>
<div class="t" style="top:572.00px;font-size:12.7px;color:#0d0d0d;left:77.40px;transform:scaleX(0.975);transform-origin:0 0;">Change-Current tax liabilities</div>
<div class="t" style="top:572.00px;font-size:12.7px;color:#0d0d0d;right:1327.00px;">68,510</div>
<div class="t" style="top:572.00px;font-size:12.7px;color:#0d0d0d;right:1234.80px;">361,826</div>
<div class="t" style="top:572.00px;font-size:12.7px;color:#0d0d0d;right:1138.00px;">0</div>
<div class="t" style="top:572.00px;font-size:12.7px;color:#0d0d0d;right:1054.40px;">-</div>
<div class="t" style="top:572.00px;font-size:12.7px;color:#0d0d0d;right:957.30px;">-</div>
<div class="t" style="top:572.00px;font-size:12.7px;color:#0d0d0d;right:853.70px;">-</div>
<div class="t" style="top:572.00px;font-size:12.7px;color:#0d0d0d;right:749.50px;">-</div>
<div class="t" style="top:572.00px;font-size:12.7px;color:#0d0d0d;right:645.30px;">-</div>
<div class="t" style="top:572.00px;font-size:12.7px;color:#0d0d0d;right:541.40px;">-</div>
<div class="t" style="top:572.00px;font-size:12.7px;color:#0d0d0d;right:437.60px;">-</div>
<div class="t" style="top:572.00px;font-size:12.7px;color:#0d0d0d;right:333.40px;">-</div>
<div class="t" style="top:572.00px;font-size:12.7px;color:#0d0d0d;right:229.60px;">-</div>
<div class="t" style="top:572.00px;font-size:12.7px;color:#0d0d0d;right:101.00px;">430,336</div>
<div class="t" style="top:590.00px;font-size:12.7px;color:#0d0d0d;left:77.40px;transform:scaleX(0.975);transform-origin:0 0;">Change-Other current liabilities</div>
<div class="t" style="top:590.00px;font-size:12.7px;color:#0d0d0d;right:1327.00px;">404,806</div>
<div class="t" style="top:590.00px;font-size:12.7px;color:#0d0d0d;right:1230.60px;">(335,374)</div>
<div class="t" style="top:590.00px;font-size:12.7px;color:#0d0d0d;right:1138.00px;">0</div>
<div class="t" style="top:590.00px;font-size:12.7px;color:#0d0d0d;right:1054.40px;">-</div>
<div class="t" style="top:590.00px;font-size:12.7px;color:#0d0d0d;right:957.30px;">-</div>
<div class="t" style="top:590.00px;font-size:12.7px;color:#0d0d0d;right:853.70px;">-</div>
<div class="t" style="top:590.00px;font-size:12.7px;color:#0d0d0d;right:749.50px;">-</div>
<div class="t" style="top:590.00px;font-size:12.7px;color:#0d0d0d;right:645.30px;">-</div>
<div class="t" style="top:590.00px;font-size:12.7px;color:#0d0d0d;right:541.40px;">-</div>
<div class="t" style="top:590.00px;font-size:12.7px;color:#0d0d0d;right:437.60px;">-</div>
<div class="t" style="top:590.00px;font-size:12.7px;color:#0d0d0d;right:333.40px;">-</div>
<div class="t" style="top:590.00px;font-size:12.7px;color:#0d0d0d;right:229.60px;">-</div>
<div class="t" style="top:590.00px;font-size:12.7px;color:#0d0d0d;right:101.00px;">69,433</div>
<div class="t" style="top:608.00px;font-size:12.7px;color:#0d0d0d;left:77.40px;transform:scaleX(0.975);transform-origin:0 0;">Change-Tax liabilities</div>
<div class="t" style="top:608.00px;font-size:12.7px;color:#0d0d0d;right:1340.30px;">-</div>
<div class="t" style="top:608.00px;font-size:12.7px;color:#0d0d0d;right:1234.80px;">0</div>
<div class="t" style="top:608.00px;font-size:12.7px;color:#0d0d0d;right:1151.30px;">-</div>
<div class="t" style="top:608.00px;font-size:12.7px;color:#0d0d0d;right:1054.40px;">-</div>
<div class="t" style="top:608.00px;font-size:12.7px;color:#0d0d0d;right:957.30px;">-</div>
<div class="t" style="top:608.00px;font-size:12.7px;color:#0d0d0d;right:853.70px;">-</div>
<div class="t" style="top:608.00px;font-size:12.7px;color:#0d0d0d;right:749.50px;">-</div>
<div class="t" style="top:608.00px;font-size:12.7px;color:#0d0d0d;right:645.30px;">-</div>
<div class="t" style="top:608.00px;font-size:12.7px;color:#0d0d0d;right:541.40px;">-</div>
<div class="t" style="top:608.00px;font-size:12.7px;color:#0d0d0d;right:437.60px;">-</div>
<div class="t" style="top:608.00px;font-size:12.7px;color:#0d0d0d;right:333.40px;">-</div>
<div class="t" style="top:608.00px;font-size:12.7px;color:#0d0d0d;right:229.60px;">-</div>
<div class="t" style="top:608.00px;font-size:12.7px;color:#0d0d0d;right:101.00px;">0</div>
<div class="t" style="top:626.00px;font-size:12.7px;color:#0d0d0d;left:77.40px;transform:scaleX(0.975);transform-origin:0 0;">Change-Deferred tax liabilities</div>
<div class="t" style="top:626.00px;font-size:12.7px;color:#0d0d0d;right:1327.00px;">789</div>
<div class="t" style="top:626.00px;font-size:12.7px;color:#0d0d0d;right:1234.80px;">5,046</div>
<div class="t" style="top:626.00px;font-size:12.7px;color:#0d0d0d;right:1133.80px;">(0)</div>
<div class="t" style="top:626.00px;font-size:12.7px;color:#0d0d0d;right:1054.40px;">-</div>
<div class="t" style="top:626.00px;font-size:12.7px;color:#0d0d0d;right:957.30px;">-</div>
<div class="t" style="top:626.00px;font-size:12.7px;color:#0d0d0d;right:853.70px;">-</div>
<div class="t" style="top:626.00px;font-size:12.7px;color:#0d0d0d;right:749.50px;">-</div>
<div class="t" style="top:626.00px;font-size:12.7px;color:#0d0d0d;right:645.30px;">-</div>
<div class="t" style="top:626.00px;font-size:12.7px;color:#0d0d0d;right:541.40px;">-</div>
<div class="t" style="top:626.00px;font-size:12.7px;color:#0d0d0d;right:437.60px;">-</div>
<div class="t" style="top:626.00px;font-size:12.7px;color:#0d0d0d;right:333.40px;">-</div>
<div class="t" style="top:626.00px;font-size:12.7px;color:#0d0d0d;right:229.60px;">-</div>
<div class="t" style="top:626.00px;font-size:12.7px;color:#0d0d0d;right:101.00px;">5,835</div>
<div class="t" style="top:644.00px;font-size:12.7px;color:#0d0d0d;left:77.40px;transform:scaleX(0.975);transform-origin:0 0;">Change-Employee benefit liabilities</div>
<div class="t" style="top:644.00px;font-size:12.7px;color:#0d0d0d;right:1327.00px;">75,259</div>
<div class="t" style="top:644.00px;font-size:12.7px;color:#0d0d0d;right:1230.60px;">(795,573)</div>
<div class="t" style="top:644.00px;font-size:12.7px;color:#0d0d0d;right:1138.00px;">0</div>
<div class="t" style="top:644.00px;font-size:12.7px;color:#0d0d0d;right:1054.40px;">-</div>
<div class="t" style="top:644.00px;font-size:12.7px;color:#0d0d0d;right:957.30px;">-</div>
<div class="t" style="top:644.00px;font-size:12.7px;color:#0d0d0d;right:853.70px;">-</div>
<div class="t" style="top:644.00px;font-size:12.7px;color:#0d0d0d;right:749.50px;">-</div>
<div class="t" style="top:644.00px;font-size:12.7px;color:#0d0d0d;right:645.30px;">-</div>
<div class="t" style="top:644.00px;font-size:12.7px;color:#0d0d0d;right:541.40px;">-</div>
<div class="t" style="top:644.00px;font-size:12.7px;color:#0d0d0d;right:437.60px;">-</div>
<div class="t" style="top:644.00px;font-size:12.7px;color:#0d0d0d;right:333.40px;">-</div>
<div class="t" style="top:644.00px;font-size:12.7px;color:#0d0d0d;right:229.60px;">-</div>
<div class="t" style="top:644.00px;font-size:12.7px;color:#0d0d0d;right:96.80px;">(720,314)</div>
<div class="t" style="top:662.00px;font-size:12.7px;color:#0d0d0d;left:77.40px;transform:scaleX(0.975);transform-origin:0 0;">Change-Other non-current liabilities</div>
<div class="t" style="top:662.00px;font-size:12.7px;color:#0d0d0d;right:1340.30px;">-</div>
<div class="t" style="top:662.00px;font-size:12.7px;color:#0d0d0d;right:1248.10px;">-</div>
<div class="t" style="top:662.00px;font-size:12.7px;color:#0d0d0d;right:1151.30px;">-</div>
<div class="t" style="top:662.00px;font-size:12.7px;color:#0d0d0d;right:1054.40px;">-</div>
<div class="t" style="top:662.00px;font-size:12.7px;color:#0d0d0d;right:957.30px;">-</div>
<div class="t" style="top:662.00px;font-size:12.7px;color:#0d0d0d;right:853.70px;">-</div>
<div class="t" style="top:662.00px;font-size:12.7px;color:#0d0d0d;right:749.50px;">-</div>
<div class="t" style="top:662.00px;font-size:12.7px;color:#0d0d0d;right:645.30px;">-</div>
<div class="t" style="top:662.00px;font-size:12.7px;color:#0d0d0d;right:541.40px;">-</div>
<div class="t" style="top:662.00px;font-size:12.7px;color:#0d0d0d;right:437.60px;">-</div>
<div class="t" style="top:662.00px;font-size:12.7px;color:#0d0d0d;right:333.40px;">-</div>
<div class="t" style="top:662.00px;font-size:12.7px;color:#0d0d0d;right:229.60px;">-</div>
<div class="t" style="top:662.00px;font-size:12.7px;color:#0d0d0d;right:114.30px;">-</div>
<div class="t" style="top:680.00px;font-size:12.7px;color:#0d0d0d;left:77.40px;transform:scaleX(0.975);transform-origin:0 0;">Change-Prepayments</div>
<div class="t" style="top:680.00px;font-size:12.7px;color:#0d0d0d;right:1322.80px;">(536,992)</div>
<div class="t" style="top:680.00px;font-size:12.7px;color:#0d0d0d;right:1234.80px;">448,421</div>
<div class="t" style="top:680.00px;font-size:12.7px;color:#0d0d0d;right:1133.80px;">(0)</div>
<div class="t" style="top:680.00px;font-size:12.7px;color:#0d0d0d;right:1054.40px;">-</div>
<div class="t" style="top:680.00px;font-size:12.7px;color:#0d0d0d;right:957.30px;">-</div>
<div class="t" style="top:680.00px;font-size:12.7px;color:#0d0d0d;right:853.70px;">-</div>
<div class="t" style="top:680.00px;font-size:12.7px;color:#0d0d0d;right:749.50px;">-</div>
<div class="t" style="top:680.00px;font-size:12.7px;color:#0d0d0d;right:645.30px;">-</div>
<div class="t" style="top:680.00px;font-size:12.7px;color:#0d0d0d;right:541.40px;">-</div>
<div class="t" style="top:680.00px;font-size:12.7px;color:#0d0d0d;right:437.60px;">-</div>
<div class="t" style="top:680.00px;font-size:12.7px;color:#0d0d0d;right:333.40px;">-</div>
<div class="t" style="top:680.00px;font-size:12.7px;color:#0d0d0d;right:229.60px;">-</div>
<div class="t" style="top:680.00px;font-size:12.7px;color:#0d0d0d;right:96.80px;">(88,571)</div>
<div class="t" style="top:698.00px;font-size:12.7px;color:#e8912d;font-weight:700;left:63.50px;transform:scaleX(0.95);transform-origin:0 0;">Increase (Decrease) in Accounts Payable</div>
<div class="t" style="top:698.00px;font-size:12.7px;color:#e8912d;font-weight:700;right:1322.80px;">(1,674,579)</div>
<div class="t" style="top:698.00px;font-size:12.7px;color:#e8912d;font-weight:700;right:1230.60px;">(2,588,670)</div>
<div class="t" style="top:698.00px;font-size:12.7px;color:#e8912d;font-weight:700;right:1133.80px;">(0)</div>
<div class="t" style="top:698.00px;font-size:12.7px;color:#e8912d;font-weight:700;right:1054.40px;">-</div>
<div class="t" style="top:698.00px;font-size:12.7px;color:#e8912d;font-weight:700;right:957.30px;">-</div>
<div class="t" style="top:698.00px;font-size:12.7px;color:#e8912d;font-weight:700;right:853.70px;">-</div>
<div class="t" style="top:698.00px;font-size:12.7px;color:#e8912d;font-weight:700;right:749.50px;">-</div>
<div class="t" style="top:698.00px;font-size:12.7px;color:#e8912d;font-weight:700;right:645.30px;">-</div>
<div class="t" style="top:698.00px;font-size:12.7px;color:#e8912d;font-weight:700;right:541.40px;">-</div>
<div class="t" style="top:698.00px;font-size:12.7px;color:#e8912d;font-weight:700;right:437.60px;">-</div>
<div class="t" style="top:698.00px;font-size:12.7px;color:#e8912d;font-weight:700;right:333.40px;">-</div>
<div class="t" style="top:698.00px;font-size:12.7px;color:#e8912d;font-weight:700;right:229.60px;">-</div>
<div class="t" style="top:698.00px;font-size:12.7px;color:#e8912d;font-weight:700;right:96.80px;">(4,263,249)</div>
<div class="t" style="top:734.00px;font-size:12.7px;color:#0d0d0d;left:49.20px;transform:scaleX(0.975);transform-origin:0 0;">Cash Flow from Operations</div>
<div class="t" style="top:734.00px;font-size:12.7px;color:#0d0d0d;right:1322.80px;">(3,431,975)</div>
<div class="t" style="top:734.00px;font-size:12.7px;color:#0d0d0d;right:1230.60px;">(1,543,607)</div>
<div class="t" style="top:734.00px;font-size:12.7px;color:#0d0d0d;right:1138.00px;">26,700,105</div>
<div class="t" style="top:734.00px;font-size:12.7px;color:#0d0d0d;right:1041.10px;">31,501,870</div>
<div class="t" style="top:734.00px;font-size:12.7px;color:#0d0d0d;right:944.00px;">32,202,289</div>
<div class="t" style="top:734.00px;font-size:12.7px;color:#0d0d0d;right:840.40px;">23,577,690</div>
<div class="t" style="top:734.00px;font-size:12.7px;color:#0d0d0d;right:736.20px;">24,447,647</div>
<div class="t" style="top:734.00px;font-size:12.7px;color:#0d0d0d;right:632.00px;">23,629,734</div>
<div class="t" style="top:734.00px;font-size:12.7px;color:#0d0d0d;right:523.90px;">(92,879)</div>
<div class="t" style="top:734.00px;font-size:12.7px;color:#0d0d0d;right:420.10px;">(71,640)</div>
<div class="t" style="top:734.00px;font-size:12.7px;color:#0d0d0d;right:315.90px;">(112,592)</div>
<div class="t" style="top:734.00px;font-size:12.7px;color:#0d0d0d;right:212.10px;">(110,057)</div>
<div class="t" style="top:734.00px;font-size:12.7px;color:#0d0d0d;right:101.00px;">156,696,584</div>
<div class="t" style="top:770.00px;font-size:12.7px;color:#0d0d0d;left:49.20px;transform:scaleX(0.975);transform-origin:0 0;">Change-Machines Plant and equipment</div>
<div class="t" style="top:770.00px;font-size:12.7px;color:#0d0d0d;right:1340.30px;">-</div>
<div class="t" style="top:770.00px;font-size:12.7px;color:#0d0d0d;right:1248.10px;">-</div>
<div class="t" style="top:770.00px;font-size:12.7px;color:#0d0d0d;right:1151.30px;">-</div>
<div class="t" style="top:770.00px;font-size:12.7px;color:#0d0d0d;right:1054.40px;">-</div>
<div class="t" style="top:770.00px;font-size:12.7px;color:#0d0d0d;right:957.30px;">-</div>
<div class="t" style="top:770.00px;font-size:12.7px;color:#0d0d0d;right:853.70px;">-</div>
<div class="t" style="top:770.00px;font-size:12.7px;color:#0d0d0d;right:749.50px;">-</div>
<div class="t" style="top:770.00px;font-size:12.7px;color:#0d0d0d;right:645.30px;">-</div>
<div class="t" style="top:770.00px;font-size:12.7px;color:#0d0d0d;right:541.40px;">-</div>
<div class="t" style="top:770.00px;font-size:12.7px;color:#0d0d0d;right:437.60px;">-</div>
<div class="t" style="top:770.00px;font-size:12.7px;color:#0d0d0d;right:333.40px;">-</div>
<div class="t" style="top:770.00px;font-size:12.7px;color:#0d0d0d;right:229.60px;">-</div>
<div class="t" style="top:770.00px;font-size:12.7px;color:#0d0d0d;right:114.30px;">-</div>
<div class="t" style="top:788.00px;font-size:12.7px;color:#0d0d0d;left:70.30px;transform:scaleX(0.975);transform-origin:0 0;">Change-Goodwill</div>
<div class="t" style="top:788.00px;font-size:12.7px;color:#0d0d0d;right:1340.30px;">-</div>
<div class="t" style="top:788.00px;font-size:12.7px;color:#0d0d0d;right:1248.10px;">-</div>
<div class="t" style="top:788.00px;font-size:12.7px;color:#0d0d0d;right:1151.30px;">-</div>
<div class="t" style="top:788.00px;font-size:12.7px;color:#0d0d0d;right:1054.40px;">-</div>
<div class="t" style="top:788.00px;font-size:12.7px;color:#0d0d0d;right:957.30px;">-</div>
<div class="t" style="top:788.00px;font-size:12.7px;color:#0d0d0d;right:853.70px;">-</div>
<div class="t" style="top:788.00px;font-size:12.7px;color:#0d0d0d;right:749.50px;">-</div>
<div class="t" style="top:788.00px;font-size:12.7px;color:#0d0d0d;right:645.30px;">-</div>
<div class="t" style="top:788.00px;font-size:12.7px;color:#0d0d0d;right:541.40px;">-</div>
<div class="t" style="top:788.00px;font-size:12.7px;color:#0d0d0d;right:437.60px;">-</div>
<div class="t" style="top:788.00px;font-size:12.7px;color:#0d0d0d;right:333.40px;">-</div>
<div class="t" style="top:788.00px;font-size:12.7px;color:#0d0d0d;right:229.60px;">-</div>
<div class="t" style="top:788.00px;font-size:12.7px;color:#0d0d0d;right:114.30px;">-</div>
<div class="t" style="top:806.00px;font-size:12.7px;color:#0d0d0d;left:63.50px;transform:scaleX(0.975);transform-origin:0 0;">Change-Intangible assets</div>
<div class="t" style="top:806.00px;font-size:12.7px;color:#0d0d0d;right:1340.30px;">-</div>
<div class="t" style="top:806.00px;font-size:12.7px;color:#0d0d0d;right:1248.10px;">-</div>
<div class="t" style="top:806.00px;font-size:12.7px;color:#0d0d0d;right:1151.30px;">-</div>
<div class="t" style="top:806.00px;font-size:12.7px;color:#0d0d0d;right:1054.40px;">-</div>
<div class="t" style="top:806.00px;font-size:12.7px;color:#0d0d0d;right:957.30px;">-</div>
<div class="t" style="top:806.00px;font-size:12.7px;color:#0d0d0d;right:853.70px;">-</div>
<div class="t" style="top:806.00px;font-size:12.7px;color:#0d0d0d;right:749.50px;">-</div>
<div class="t" style="top:806.00px;font-size:12.7px;color:#0d0d0d;right:645.30px;">-</div>
<div class="t" style="top:806.00px;font-size:12.7px;color:#0d0d0d;right:541.40px;">-</div>
<div class="t" style="top:806.00px;font-size:12.7px;color:#0d0d0d;right:437.60px;">-</div>
<div class="t" style="top:806.00px;font-size:12.7px;color:#0d0d0d;right:333.40px;">-</div>
<div class="t" style="top:806.00px;font-size:12.7px;color:#0d0d0d;right:229.60px;">-</div>
<div class="t" style="top:806.00px;font-size:12.7px;color:#0d0d0d;right:114.30px;">-</div>
<div class="t" style="top:824.00px;font-size:12.7px;color:#0d0d0d;left:63.50px;transform:scaleX(0.975);transform-origin:0 0;">Change-Investments</div>
<div class="t" style="top:824.00px;font-size:12.7px;color:#0d0d0d;right:1340.30px;">-</div>
<div class="t" style="top:824.00px;font-size:12.7px;color:#0d0d0d;right:1248.10px;">-</div>
<div class="t" style="top:824.00px;font-size:12.7px;color:#0d0d0d;right:1151.30px;">-</div>
<div class="t" style="top:824.00px;font-size:12.7px;color:#0d0d0d;right:1054.40px;">-</div>
<div class="t" style="top:824.00px;font-size:12.7px;color:#0d0d0d;right:957.30px;">-</div>
<div class="t" style="top:824.00px;font-size:12.7px;color:#0d0d0d;right:853.70px;">-</div>
<div class="t" style="top:824.00px;font-size:12.7px;color:#0d0d0d;right:749.50px;">-</div>
<div class="t" style="top:824.00px;font-size:12.7px;color:#0d0d0d;right:645.30px;">-</div>
<div class="t" style="top:824.00px;font-size:12.7px;color:#0d0d0d;right:541.40px;">-</div>
<div class="t" style="top:824.00px;font-size:12.7px;color:#0d0d0d;right:437.60px;">-</div>
<div class="t" style="top:824.00px;font-size:12.7px;color:#0d0d0d;right:333.40px;">-</div>
<div class="t" style="top:824.00px;font-size:12.7px;color:#0d0d0d;right:229.60px;">-</div>
<div class="t" style="top:824.00px;font-size:12.7px;color:#0d0d0d;right:114.30px;">-</div>
<div class="t" style="top:842.00px;font-size:12.7px;color:#0d0d0d;left:63.50px;transform:scaleX(0.975);transform-origin:0 0;">Change-Other non-current assets</div>
<div class="t" style="top:842.00px;font-size:12.7px;color:#0d0d0d;right:1322.80px;">(611,300)</div>
<div class="t" style="top:842.00px;font-size:12.7px;color:#0d0d0d;right:1230.60px;">(115,978)</div>
<div class="t" style="top:842.00px;font-size:12.7px;color:#0d0d0d;right:1133.80px;">(0)</div>
<div class="t" style="top:842.00px;font-size:12.7px;color:#0d0d0d;right:1054.40px;">-</div>
<div class="t" style="top:842.00px;font-size:12.7px;color:#0d0d0d;right:957.30px;">-</div>
<div class="t" style="top:842.00px;font-size:12.7px;color:#0d0d0d;right:853.70px;">-</div>
<div class="t" style="top:842.00px;font-size:12.7px;color:#0d0d0d;right:749.50px;">-</div>
<div class="t" style="top:842.00px;font-size:12.7px;color:#0d0d0d;right:645.30px;">-</div>
<div class="t" style="top:842.00px;font-size:12.7px;color:#0d0d0d;right:541.40px;">-</div>
<div class="t" style="top:842.00px;font-size:12.7px;color:#0d0d0d;right:437.60px;">-</div>
<div class="t" style="top:842.00px;font-size:12.7px;color:#0d0d0d;right:333.40px;">-</div>
<div class="t" style="top:842.00px;font-size:12.7px;color:#0d0d0d;right:229.60px;">-</div>
<div class="t" style="top:842.00px;font-size:12.7px;color:#0d0d0d;right:96.80px;">(727,278)</div>
<div class="t" style="top:860.00px;font-size:12.7px;color:#0d0d0d;left:63.50px;transform:scaleX(0.975);transform-origin:0 0;">Change-Land and Buildings</div>
<div class="t" style="top:860.00px;font-size:12.7px;color:#0d0d0d;right:1340.30px;">-</div>
<div class="t" style="top:860.00px;font-size:12.7px;color:#0d0d0d;right:1248.10px;">-</div>
<div class="t" style="top:860.00px;font-size:12.7px;color:#0d0d0d;right:1151.30px;">-</div>
<div class="t" style="top:860.00px;font-size:12.7px;color:#0d0d0d;right:1054.40px;">-</div>
<div class="t" style="top:860.00px;font-size:12.7px;color:#0d0d0d;right:957.30px;">-</div>
<div class="t" style="top:860.00px;font-size:12.7px;color:#0d0d0d;right:853.70px;">-</div>
<div class="t" style="top:860.00px;font-size:12.7px;color:#0d0d0d;right:749.50px;">-</div>
<div class="t" style="top:860.00px;font-size:12.7px;color:#0d0d0d;right:645.30px;">-</div>
<div class="t" style="top:860.00px;font-size:12.7px;color:#0d0d0d;right:541.40px;">-</div>
<div class="t" style="top:860.00px;font-size:12.7px;color:#0d0d0d;right:437.60px;">-</div>
<div class="t" style="top:860.00px;font-size:12.7px;color:#0d0d0d;right:333.40px;">-</div>
<div class="t" style="top:860.00px;font-size:12.7px;color:#0d0d0d;right:229.60px;">-</div>
<div class="t" style="top:860.00px;font-size:12.7px;color:#0d0d0d;right:114.30px;">-</div>
<div class="t" style="top:878.21px;font-size:12.7px;color:#0d0d0d;left:63.50px;transform:scaleX(0.975);transform-origin:0 0;">Change-Computer Equipment</div>
<div class="t" style="top:878.21px;font-size:12.7px;color:#0d0d0d;right:1327.00px;">8,662</div>
<div class="t" style="top:878.21px;font-size:12.7px;color:#0d0d0d;right:1230.60px;">(584)</div>
<div class="t" style="top:878.21px;font-size:12.7px;color:#0d0d0d;right:1138.00px;">0</div>
<div class="t" style="top:878.21px;font-size:12.7px;color:#0d0d0d;right:1054.40px;">-</div>
<div class="t" style="top:878.21px;font-size:12.7px;color:#0d0d0d;right:957.30px;">-</div>
<div class="t" style="top:878.21px;font-size:12.7px;color:#0d0d0d;right:853.70px;">-</div>
<div class="t" style="top:878.21px;font-size:12.7px;color:#0d0d0d;right:749.50px;">-</div>
<div class="t" style="top:878.21px;font-size:12.7px;color:#0d0d0d;right:645.30px;">-</div>
<div class="t" style="top:878.21px;font-size:12.7px;color:#0d0d0d;right:541.40px;">-</div>
<div class="t" style="top:878.21px;font-size:12.7px;color:#0d0d0d;right:437.60px;">-</div>
<div class="t" style="top:878.21px;font-size:12.7px;color:#0d0d0d;right:333.40px;">-</div>
<div class="t" style="top:878.21px;font-size:12.7px;color:#0d0d0d;right:229.60px;">-</div>
<div class="t" style="top:878.21px;font-size:12.7px;color:#0d0d0d;right:101.00px;">8,078</div>
<div class="r" style="left:46px;top:315.8px;width:1626.7px;height:1.1999999999999886px;background:#111;"></div>
<div class="r" style="left:46px;top:478px;width:1626.7px;height:1.1999999999999886px;background:#111;"></div>
<div class="r" style="left:46px;top:496px;width:1626.7px;height:1.1999999999999886px;background:#111;"></div>
<div class="r" style="left:46px;top:694px;width:1626.7px;height:1.2000000000000455px;background:#111;"></div>
<div class="r" style="left:46px;top:712px;width:1626.7px;height:1.2000000000000455px;background:#111;"></div>
<div class="r" style="left:1036px;top:297px;width:103px;height:17px;border:2px solid #116b38"></div>
<div class="r" style="left:1137.5px;top:312.5px;width:7.5px;height:7.5px;background:#fff;"></div>
<div class="r" style="left:1139px;top:314px;width:5px;height:5px;background:#116b38;"></div>
<div class="r" style="left:1737.6px;top:168px;width:1.0px;height:722px;background:#dcdcdc;"></div>
<div class="r" style="left:1738.6px;top:149px;width:25.40000000000009px;height:741px;background:#f0f0f0;"></div>
<div class="r" style="left:1740.5px;top:149px;width:22px;height:741px;border-radius:11px;background:#f4f4f4"></div>
<svg style="left:1746px;top:154.5px" width="11" height="10" viewBox="0 0 11 10"><path d="M5.5 1.4 L10 8.6 H1 Z" fill="#6e6e6e" stroke="#6e6e6e" stroke-linejoin="round" stroke-width="1.6"/></svg>
<div class="r" style="left:1746px;top:170px;width:11px;height:226px;border-radius:5.5px;background:#6e6e6e"></div>
<svg style="left:1746px;top:876.5px" width="11" height="10" viewBox="0 0 11 10"><path d="M5.5 8.6 L10 1.4 H1 Z" fill="#6e6e6e" stroke="#6e6e6e" stroke-linejoin="round" stroke-width="1.6"/></svg>
<div class="r" style="left:3px;top:890px;width:1761px;height:39.5px;background:#f0f0f0;"></div>
<div class="r" style="left:120px;top:890px;width:230px;height:10px;background:#fff;"></div>
<div class="r" style="left:3px;top:890px;width:141.5px;height:39.5px;background:#f0f0f0;border-top-right-radius:7px;border-top:1px solid #e2e2e2;box-sizing:border-box"></div>
<div class="r" style="left:322.5px;top:890px;width:1441.5px;height:39.5px;background:#f0f0f0;border-top-left-radius:7px;border-top:1px solid #e2e2e2;box-sizing:border-box"></div>
<svg style="left:34px;top:902px" width="10" height="14" viewBox="0 0 10 14"><path d="M8 0.8 L1.5 7 L8 13.2" fill="none" stroke="#8a8a8a" stroke-width="1.2"/></svg>
<svg style="left:74px;top:902px" width="10" height="14" viewBox="0 0 10 14"><path d="M1.5 0.8 L8 7 L1.5 13.2" fill="none" stroke="#8a8a8a" stroke-width="1.2"/></svg>
<div class="r" style="left:144px;top:890px;width:179px;height:35px;background:#fff;border-radius:0 0 7px 7px;box-shadow:0 0.6px 1px rgba(0,0,0,0.14)"></div>
<div class="t" style="top:897.70px;font-size:18px;color:#242424;left:153.70px;transform:scaleX(0.984);transform-origin:0 0;-webkit-text-stroke:0.45px #242424;">Cashflow Statement</div>
<div class="r" style="left:154.5px;top:919.5px;width:158.0px;height:2.2999999999999545px;background:#107c41;"></div>
<div class="r" style="left:328.3px;top:898px;width:1.0px;height:24px;background:#c8c8c8;"></div>
<svg style="left:380px;top:901px" width="16" height="16" viewBox="0 0 16 16"><path d="M8 0.5 V15.5 M0.5 8 H15.5" stroke="#333" stroke-width="1.4"/></svg>
<div class="r" style="left:1062.5px;top:903.5px;width:2.5px;height:2.6000000000000227px;background:#333;"></div>
<div class="r" style="left:1062.5px;top:908.6px;width:2.5px;height:2.6000000000000227px;background:#333;"></div>
<div class="r" style="left:1062.5px;top:913.6px;width:2.5px;height:2.6000000000000227px;background:#333;"></div>
<div class="r" style="left:1084.5px;top:899px;width:653px;height:21px;border-radius:10.5px;background:#f6f6f6"></div>
<svg style="left:1089px;top:903.5px" width="10" height="12" viewBox="0 0 10 12"><path d="M0.8 6 L9.5 0.5 V11.5 Z" fill="#6e6e6e"/></svg>
<div class="r" style="left:1105px;top:903.3px;width:589.5px;height:11.8px;border-radius:6px;background:#6e6e6e"></div>
<svg style="left:1722.5px;top:903.5px" width="10" height="12" viewBox="0 0 10 12"><path d="M9.2 6 L0.5 0.5 V11.5 Z" fill="#6e6e6e"/></svg>
<div class="r" style="left:3px;top:929.5px;width:1761px;height:26.5px;background:#f3f3f3;"></div>
<div class="r" style="left:3px;top:929.5px;width:1761px;height:1.0px;background:#d6d6d6;"></div>
<div class="t" style="top:938.44px;font-size:13.6px;color:#262626;left:17.00px;transform:scaleX(0.905);transform-origin:0 0;">Ready</div>
<div class="t" style="top:938.44px;font-size:13.6px;color:#262626;left:74.00px;transform:scaleX(0.91);transform-origin:0 0;">Calculate</div>
<svg style="left:151px;top:934.5px" width="20" height="19" viewBox="0 0 20 19">
<circle cx="8.8" cy="3.2" r="2.3" fill="none" stroke="#2a2a2a" stroke-width="1.2"/>
<g fill="none" stroke-linecap="round" stroke-linejoin="round">
<path d="M1.8 6 C4.5 8.2 6.5 8.4 8.8 8.4 C11.2 8.4 13.5 8 16 6 M8.6 8.6 C8.8 12 7.5 14.8 4.2 17.2 M8.4 12.8 L10 15.2" stroke="#2a2a2a" stroke-width="3.6"/>
<path d="M1.8 6 C4.5 8.2 6.5 8.4 8.8 8.4 C11.2 8.4 13.5 8 16 6 M8.6 8.6 C8.8 12 7.5 14.8 4.2 17.2 M8.4 12.8 L10 15.2" stroke="#f3f3f3" stroke-width="1.4"/>
</g>
<path d="M10.5 12 L18.6 18.3 M18.6 12 L10.5 18.3" stroke="#f3f3f3" stroke-width="3"/>
<path d="M10.5 12 L18.6 18.3 M18.6 12 L10.5 18.3" stroke="#2a2a2a" stroke-width="1.2"/>
</svg>
<div class="t" style="top:938.24px;font-size:13.6px;color:#262626;left:174.60px;transform:scaleX(0.93);transform-origin:0 0;">Accessibility: Investigate</div>
<div class="r" style="left:1384px;top:930.5px;width:49px;height:25.5px;background:#dcdcdc;"></div>
<svg style="left:1399px;top:935px" width="18" height="17" viewBox="0 0 18 17">
<rect x="0.6" y="0.6" width="16.8" height="15.8" fill="none" stroke="#333" stroke-width="1.2"/>
<path d="M6.2 0.6 V16.4 M11.8 0.6 V16.4 M0.6 5.9 H17.4 M0.6 11.1 H17.4" stroke="#333" stroke-width="1.2"/></svg>
<svg style="left:1449px;top:934px" width="20" height="19" viewBox="0 0 20 19">
<rect x="1.9" y="1.9" width="16" height="15.3" rx="0.8" fill="none" stroke="#3a3a3a" stroke-width="1.5"/>
<rect x="5.6" y="4.6" width="8.8" height="9.8" fill="none" stroke="#222" stroke-width="1.3"/>
<path d="M7.5 7 H12.5 M7.5 9.4 H12.5 M7.5 11.9 H12.5" stroke="#555" stroke-width="0.9"/></svg>
<svg style="left:1499px;top:934px" width="20" height="19" viewBox="0 0 20 19">
<rect x="1.8" y="1.9" width="16.1" height="15.3" rx="0.8" fill="none" stroke="#3a3a3a" stroke-width="1.5"/>
<path d="M6.7 1.9 V10.2 M12 1.9 V10.2 M1.8 10.2 H12" fill="none" stroke="#333" stroke-width="1.3"/></svg>
<div class="r" style="left:1540.5px;top:943.2px;width:10.0px;height:1.1999999999999318px;background:#333;"></div>
<div class="r" style="left:1557px;top:943.4px;width:124.5px;height:1.0px;background:#7a7a7a;"></div>
<div class="r" style="left:1599.8px;top:937px;width:5.7999999999999545px;height:13.5px;background:#444;border-radius:1px;"></div>
<div class="r" style="left:1619px;top:940px;width:1px;height:7.5px;background:#7a7a7a;"></div>
<svg style="left:1686.5px;top:938px" width="12" height="12" viewBox="0 0 12 12"><path d="M6 0.5 V11.5 M0.5 6 H11.5" stroke="#333" stroke-width="1.3"/></svg>
<div class="t" style="top:937.70px;font-size:13.3px;color:#262626;left:1714.00px;transform:scaleX(0.9);transform-origin:0 0;">75%</div>
</body></html>
